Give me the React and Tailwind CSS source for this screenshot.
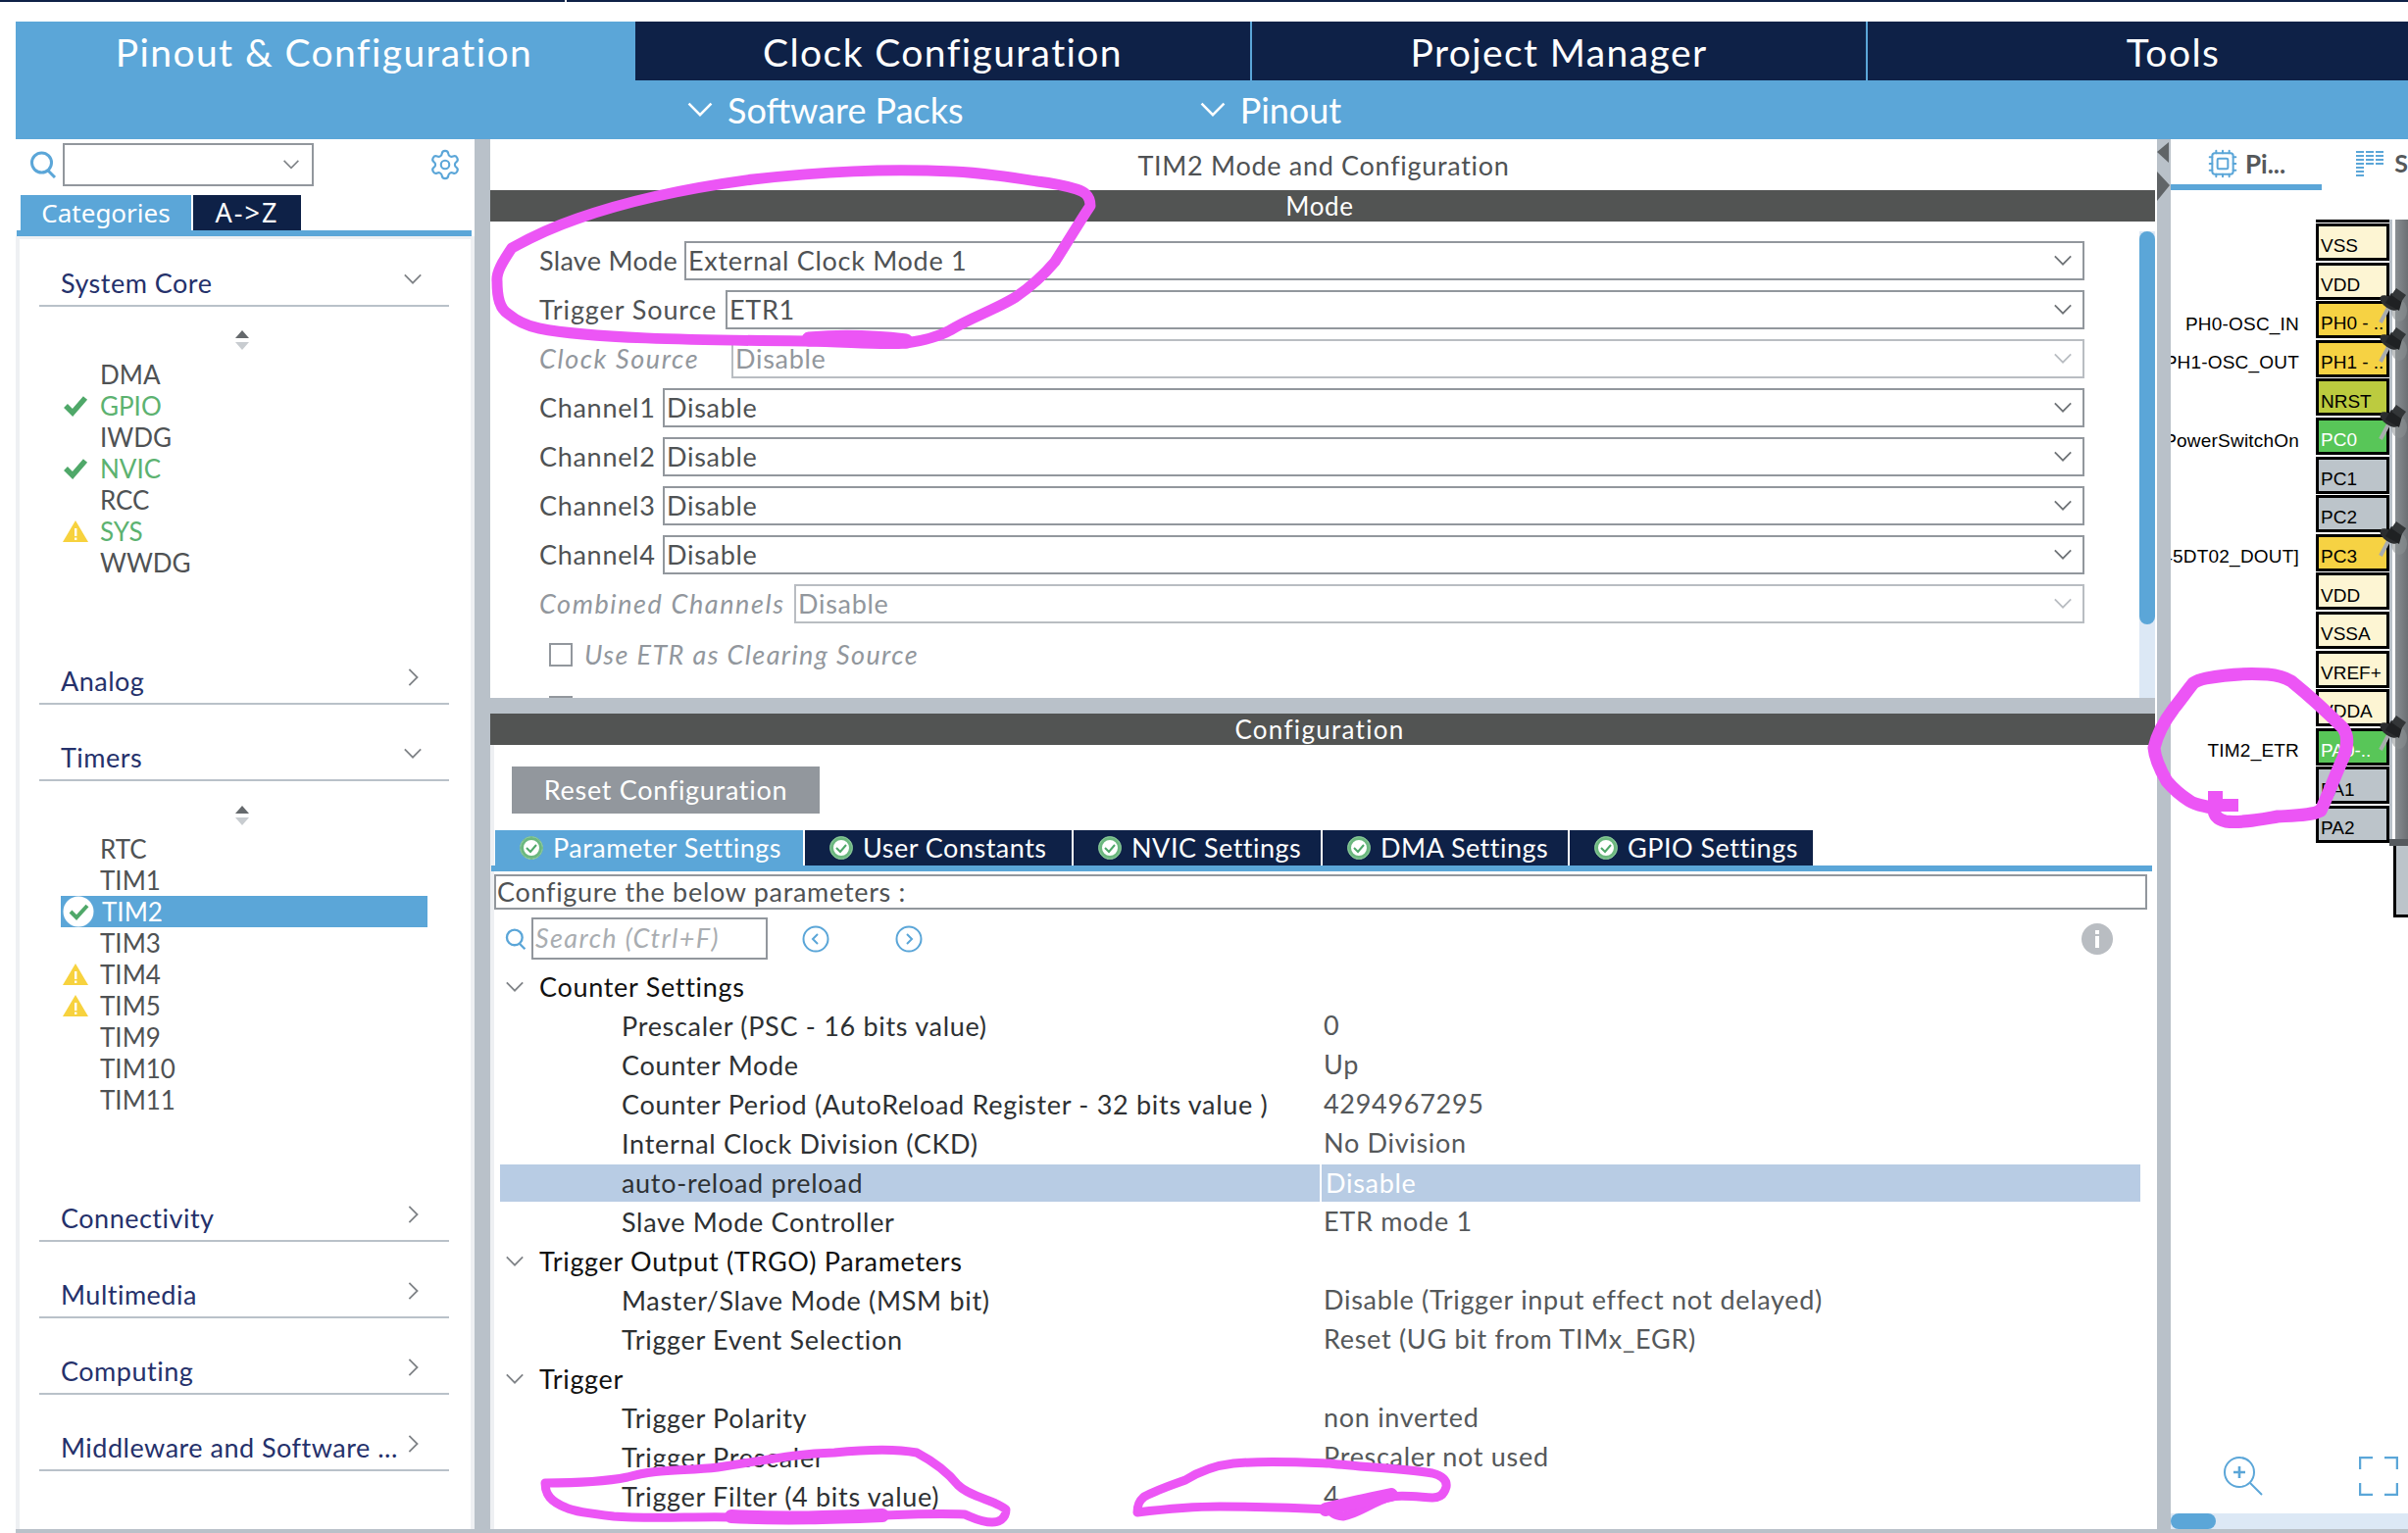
import { Settings, Cpu } from "lucide-react";

const font = "font-['Lato',sans-serif]";

const systemCore = [
  { name: "DMA" },
  { name: "GPIO", icon: "check", green: true },
  { name: "IWDG" },
  { name: "NVIC", icon: "check", green: true },
  { name: "RCC" },
  { name: "SYS", icon: "warn", green: true },
  { name: "WWDG" },
];

const timers = [
  { name: "RTC" },
  { name: "TIM1" },
  { name: "TIM2", icon: "circle", selected: true },
  { name: "TIM3" },
  { name: "TIM4", icon: "warn" },
  { name: "TIM5", icon: "warn" },
  { name: "TIM9" },
  { name: "TIM10" },
  { name: "TIM11" },
];

const modeRows = [
  { label: "Slave Mode", value: "External Clock Mode 1", width: "w-[148px] tracking-[0.3px]" },
  { label: "Trigger Source", value: "ETR1", width: "w-[190px] tracking-[0.9px]" },
  { label: "Clock Source", value: "Disable", width: "w-[196px]", disabled: true },
  { label: "Channel1", value: "Disable", width: "w-[126px]" },
  { label: "Channel2", value: "Disable", width: "w-[126px]" },
  { label: "Channel3", value: "Disable", width: "w-[126px]" },
  { label: "Channel4", value: "Disable", width: "w-[126px]" },
  { label: "Combined Channels", value: "Disable", width: "w-[260px]", disabled: true },
];

const configTabs = [
  { name: "Parameter Settings", width: "w-[314px]", active: true },
  { name: "User Constants", width: "w-[272px]" },
  { name: "NVIC Settings", width: "w-[252px]" },
  { name: "DMA Settings", width: "w-[250px]" },
  { name: "GPIO Settings", width: "w-[248px]" },
];

const params = [
  { head: "Counter Settings" },
  { label: "Prescaler (PSC - 16 bits value)", value: "0" },
  { label: "Counter Mode", value: "Up" },
  { label: "Counter Period (AutoReload Register - 32 bits value )", value: "4294967295" },
  { label: "Internal Clock Division (CKD)", value: "No Division" },
  { label: "auto-reload preload", value: "Disable", selected: true },
  { label: "Slave Mode Controller", value: "ETR mode 1" },
  { head: "Trigger Output (TRGO) Parameters" },
  { label: "Master/Slave Mode (MSM bit)", value: "Disable (Trigger input effect not delayed)" },
  { label: "Trigger Event Selection", value: "Reset (UG bit from TIMx_EGR)" },
  { head: "Trigger" },
  { label: "Trigger Polarity", value: "non inverted" },
  { label: "Trigger Prescaler", value: "Prescaler not used" },
  { label: "Trigger Filter (4 bits value)", value: "4" },
];

const pins = [
  { name: "VSS", bg: "bg-[#fdf5d3]" },
  { name: "VDD", bg: "bg-[#fdf5d3]" },
  { name: "PH0 - ..", bg: "bg-[#f6d243]", label: "PH0-OSC_IN", pinned: true },
  { name: "PH1 - ..", bg: "bg-[#f6d243]", label: "PH1-OSC_OUT", pinned: true },
  { name: "NRST", bg: "bg-[#bccb3f]" },
  { name: "PC0", bg: "bg-[#58c658]", label: "PowerSwitchOn", pinned: true, light: true },
  { name: "PC1", bg: "bg-[#bcc4ca]" },
  { name: "PC2", bg: "bg-[#bcc4ca]" },
  { name: "PC3", bg: "bg-[#f6d243]", label: "PDM_OUT [MP45DT02_DOUT]", pinned: true },
  { name: "VDD", bg: "bg-[#fdf5d3]" },
  { name: "VSSA", bg: "bg-[#fdf5d3]" },
  { name: "VREF+", bg: "bg-[#fdf5d3]" },
  { name: "VDDA", bg: "bg-[#fdf5d3]" },
  { name: "PA0-..", bg: "bg-[#58c658]", label: "TIM2_ETR", pinned: true, light: true },
  { name: "PA1", bg: "bg-[#bcc4ca]" },
  { name: "PA2", bg: "bg-[#bcc4ca]" },
];

function Chevron({ dir = "down", className = "" }) {
  const d = dir === "down" ? "M2 6l9 9 9-9" : "M7 2l9 9-9 9";
  return (
    <svg viewBox="0 0 22 22" className={className} fill="none" stroke="currentColor" strokeWidth="2">
      <path d={d} />
    </svg>
  );
}

function SearchIcon({ className = "" }) {
  return (
    <svg viewBox="0 0 28 28" className={className} fill="none" stroke="#5ba6d8" strokeWidth="3">
      <circle cx="12.5" cy="12" r="10" />
      <path d="M19 20l7 7" />
    </svg>
  );
}

function StatusIcon({ type }) {
  if (type === "check") {
    return (
      <svg viewBox="0 0 26 22" className="h-[24px] w-[26px]" fill="none" stroke="#4fa869" strokeWidth="5.5">
        <path d="M3 11l7 7L23 3" />
      </svg>
    );
  }
  if (type === "warn") {
    return (
      <svg viewBox="0 0 26 24" className="h-[24px] w-[26px]">
        <path d="M13 1L26 23H0z" fill="#f7d23e" />
        <rect x="12" y="9" width="2.4" height="8" fill="#fff" />
        <rect x="12" y="18.5" width="2.4" height="2.4" fill="#fff" />
      </svg>
    );
  }
  return (
    <svg viewBox="0 0 32 32" className="h-[32px] w-[32px]">
      <ellipse cx="16" cy="16" rx="15.5" ry="15.5" fill="#fff" />
      <path d="M8 16l6 6L25 10" fill="none" stroke="#4fa869" strokeWidth="4" />
    </svg>
  );
}

function TabCheck() {
  return (
    <svg viewBox="0 0 24 24" className="h-[24px] w-[24px] shrink-0">
      <circle cx="12" cy="12" r="11.5" fill="#fff" stroke="#72bc85" strokeWidth="1" />
      <circle cx="12" cy="12" r="9.5" fill="#fff" stroke="#6cb87f" strokeWidth="3" />
      <path d="M7 12l4 4 6-7" fill="none" stroke="#4fa869" strokeWidth="2" />
    </svg>
  );
}

function SortArrows() {
  return (
    <svg viewBox="0 0 16 22" className="ml-[177px] h-[22px] w-[16px]">
      <path d="M8 1l7 8H1z" fill="#65696c" />
      <path d="M8 21l7-8H1z" fill="#c8ccd0" />
    </svg>
  );
}

function SectionHeader({ name, open, className = "" }) {
  return (
    <div className={`flex h-[50px] items-center justify-between border-b-2 border-[#b9c1c9] pl-[22px] pr-[27px] ${className}`}>
      <span className="mt-1 text-[27px] tracking-[0.5px] text-[#25316b]">{name}</span>
      <Chevron dir={open ? "down" : "right"} className="mb-1 h-[20px] w-[20px] text-[#808488]" />
    </div>
  );
}

function ItemList({ items }) {
  return (
    <div>
      {items.map((item) => (
        <div
          key={item.name}
          className={`flex h-[32px] w-[374px] items-center ${item.selected ? "bg-[#5ba6d8] text-white" : item.green ? "text-[#5cb270]" : "text-[#4f5254]"}`}
        >
          <div className="flex w-[40px] shrink-0 justify-start pl-[2px]">
            {item.icon && <StatusIcon type={item.icon} />}
          </div>
          <span className={`text-[26px] ${item.selected ? "ml-[2px]" : ""}`}>{item.name}</span>
        </div>
      ))}
    </div>
  );
}

function Sidebar() {
  return (
    <div className="flex w-[468px] shrink-0 flex-col">
      <div className="flex h-[57px] items-center pl-[14px] pr-[13px] pb-[9px] pt-[4px]">
        <SearchIcon className="h-[28px] w-[28px]" />
        <div className="ml-[6px] flex h-[44px] w-[256px] items-center justify-end border-2 border-[#92979d] pr-[12px]">
          <Chevron className="h-[18px] w-[18px] text-[#808488]" />
        </div>
        <Settings className="ml-auto h-[34px] w-[34px] text-[#5ba6d8]" strokeWidth={1.5} />
      </div>
      <div className="flex pl-[5px]">
        <div className="flex h-[36px] w-[174px] items-center justify-center bg-[#5ba6d8] text-[26px] text-white">Categories</div>
        <div className="ml-[2px] flex h-[36px] w-[110px] items-center justify-center bg-[#0e2147] text-[27px] tracking-[2px] text-white">{"A->Z"}</div>
      </div>
      <div className="ml-[1px] h-[6px] w-[464px] bg-[#5ba6d8]" />
      <div className="flex-1 border-x-[4px] border-t-[3px] border-x-[#eef0f3] border-t-[#eef0f3] bg-white pl-[20px] pr-[22px] pt-[19px]">
        <div className={`flex flex-col ${font}`}>
          <SectionHeader name="System Core" open />
          <div className="pl-[22px] pt-[23px]">
            <div className="mb-[8px] w-[374px]"><SortArrows /></div>
            <ItemList items={systemCore} />
          </div>
          <SectionHeader name="Analog" className="mt-[79px]" />
          <SectionHeader name="Timers" open className="mt-[28px]" />
          <div className="pl-[22px] pt-[24px]">
            <div className="mb-[7px] w-[374px]"><SortArrows /></div>
            <ItemList items={timers} />
          </div>
          <SectionHeader name="Connectivity" className="mt-[79px]" />
          <SectionHeader name="Multimedia" className="mt-[28px]" />
          <SectionHeader name="Computing" className="mt-[28px]" />
          <SectionHeader name="Middleware and Software ..." className="mt-[28px]" />
        </div>
      </div>
    </div>
  );
}

function ModeRow({ row }) {
  const color = row.disabled ? "text-[#92979d]" : "text-[#4f5254]";
  return (
    <div className="mb-[10px] flex h-[40px] items-center">
      <span className={`${row.width} shrink-0 whitespace-nowrap text-[27px] ${color} ${row.disabled ? "italic tracking-[1.6px]" : ""}`}>{row.label}</span>
      <div className={`flex h-[40px] flex-1 items-center justify-between border-2 ${row.disabled ? "border-[#b9bdc2]" : "border-[#92979d]"} pl-[2px] pr-[10px]`}>
        <span className={`text-[27px] ${color}`}>{row.value}</span>
        <Chevron className={`h-[20px] w-[20px] ${row.disabled ? "text-[#b9bdc2]" : "text-[#707478]"}`} />
      </div>
    </div>
  );
}

function ModePanel() {
  return (
    <div className="flex h-[486px] overflow-hidden">
      <div className="w-[1682px] pl-[50px] pr-[56px] pt-[20px]">
        {modeRows.map((row) => (
          <ModeRow key={row.label} row={row} />
        ))}
        <div className="flex h-[44px] items-center pl-[10px]">
          <div className="h-[24px] w-[24px] border-2 border-[#92979d]" />
          <span className="ml-[12px] text-[27px] italic tracking-[1.4px] text-[#92979d]">Use ETR as Clearing Source</span>
        </div>
        <div className="ml-[10px] mt-[20px] h-[24px] w-[24px] border-2 border-[#92979d]" />
      </div>
      <div className="mt-[10px] w-[16px] bg-[#dce8f5]">
        <div className="h-[401px] rounded-full bg-[#5ba6d8]" />
      </div>
    </div>
  );
}

function ParamRow({ row }) {
  if (row.head) {
    return (
      <div className="ml-[10px] flex h-[40px] items-center">
        <Chevron className="ml-[5px] h-[20px] w-[20px] text-[#808488]" />
        <span className="ml-[15px] text-[27px] text-[#111]">{row.head}</span>
      </div>
    );
  }
  return (
    <div className={`ml-[10px] flex h-[40px] w-[1673px] items-center text-[27px] ${row.selected ? "border-y border-white bg-[#b8cce4]" : ""}`}>
      <div className="w-[836px] shrink-0 pl-[124px] text-[#2e3133]">{row.label}</div>
      <div className={`h-full flex-1 pl-[4px] leading-[38px] ${row.selected ? "border-l-2 border-white text-white" : "text-[#55585a]"}`}>{row.value}</div>
    </div>
  );
}

function ConfigPanel() {
  return (
    <div className="flex-1 border-l-[4px] border-[#eef0f3]">
      <div className="pl-[18px] pt-[22px]">
        <div className="flex h-[48px] w-[314px] items-center justify-center bg-[#92979d] text-[27px] text-white">Reset Configuration</div>
      </div>
      <div className="mt-[17px] flex gap-[2px] pl-[1px]">
        {configTabs.map((tab) => (
          <div
            key={tab.name}
            className={`flex h-[36px] items-center gap-[10px] pl-[25px] text-[27px] tracking-[0.5px] text-white ${tab.width} ${tab.active ? "bg-[#5ba6d8]" : "bg-[#0e2147]"}`}
          >
            <TabCheck />
            <span>{tab.name}</span>
          </div>
        ))}
      </div>
      <div className="-ml-[3px] h-[6px] w-[1694px] bg-[#5ba6d8]" />
      <div className="ml-[0px] mt-[3px] flex h-[36px] w-[1686px] items-center border-2 border-[#92979d] pl-[1px] text-[27px] text-[#4f5254]">
        Configure the below parameters :
      </div>
      <div className="mt-[8px] flex h-[43px] items-center pl-[11px]">
        <SearchIcon className="h-[24px] w-[22px]" />
        <div className="ml-[5px] flex h-[43px] w-[241px] items-center border-2 border-[#92979d] pl-[2px] text-[27px] italic tracking-[1.4px] text-[#a9adb1]">Search (Ctrl+F)</div>
        <svg viewBox="0 0 28 28" className="ml-[35px] h-[28px] w-[28px]" fill="none" stroke="#5ba6d8" strokeWidth="2">
          <circle cx="14" cy="14" r="12.5" />
          <path d="M16 9l-5 5 5 5" />
        </svg>
        <svg viewBox="0 0 28 28" className="ml-[67px] h-[28px] w-[28px]" fill="none" stroke="#5ba6d8" strokeWidth="2">
          <circle cx="14" cy="14" r="12.5" />
          <path d="M12 9l5 5-5 5" />
        </svg>
        <svg viewBox="0 0 32 32" className="ml-[1182px] h-[32px] w-[32px]">
          <circle cx="16" cy="16" r="16" fill="#b9bdc2" />
          <rect x="14" y="13" width="4" height="12" fill="#fff" />
          <rect x="14" y="7" width="4" height="4" fill="#fff" />
        </svg>
      </div>
      <div className="mt-[8px] -ml-[4px]">
        {params.map((row) => (
          <ParamRow key={row.head || row.label} row={row} />
        ))}
      </div>
    </div>
  );
}

function CenterPanel() {
  return (
    <div className={`flex w-[1700px] shrink-0 flex-col tracking-[0.7px] ${font}`}>
      <div className="flex h-[52px] items-center justify-center pt-[2px] text-[27px] text-[#4f5254]">TIM2 Mode and Configuration</div>
      <div className="flex h-[32px] w-[1698px] items-center justify-center bg-[#525453] pr-[6px] text-[26px] text-white">Mode</div>
      <ModePanel />
      <div className="h-[16px] w-[1698px] bg-[#b9c1c9]" />
      <div className="flex h-[32px] w-[1698px] items-center justify-center bg-[#525453] pr-[6px] text-[26px] tracking-[1.3px] text-white">Configuration</div>
      <ConfigPanel />
    </div>
  );
}

function Pushpin() {
  return (
    <svg viewBox="0 0 30 38" className="absolute -top-[17px] left-[60px] z-10 h-[38px] w-[30px]">
      <ellipse cx="22" cy="24" rx="8" ry="11" fill="#8d9194" opacity="0.55" />
      <path d="M3 36l8-15" stroke="#a8abad" strokeWidth="4" fill="none" />
      <ellipse cx="12" cy="16" rx="11" ry="5.5" transform="rotate(35 12 16)" fill="#2b2d2f" />
      <path d="M14 6l11 7-3 11-14-8z" fill="#1f2123" />
      <path d="M19 1l10 7-5 7-10-7z" fill="#333638" />
    </svg>
  );
}

function PinRow({ pin }) {
  return (
    <div className="flex h-[39.6px] items-start">
      <div className="flex h-[39.6px] w-[148px] shrink-0 items-center justify-end overflow-hidden pr-[17px] pt-[8px] font-['Liberation_Sans',sans-serif] text-[19px] tracking-[0.2px] text-black">
        <span className="shrink-0 whitespace-nowrap">{pin.label}</span>
      </div>
      <div className={`relative flex h-[38px] w-[75px] shrink-0 items-center overflow-visible border-[3px] border-black pl-[2px] pt-[9px] font-['Liberation_Sans',sans-serif] text-[19px] ${pin.bg} ${pin.light ? "text-white" : "text-black"}`}>
        <span className="whitespace-nowrap">{pin.name}</span>
        {pin.pinned && <Pushpin />}
      </div>
    </div>
  );
}

function PinoutPanel() {
  return (
    <div className="relative flex w-[242px] shrink-0 flex-col overflow-hidden">
      <div className={`flex h-[46px] items-center pt-[4px] ${font}`}>
        <div className="flex w-[154px] items-center pl-[37px]">
          <Cpu className="h-[32px] w-[32px] text-[#5ba6d8]" strokeWidth={1.5} />
          <span className="ml-[7px] text-[26px] font-bold text-[#55585a]">Pi...</span>
        </div>
        <div className="ml-[36px] flex items-center">
          <svg viewBox="0 0 28 26" className="h-[26px] w-[28px]" fill="#5ba6d8">
            <rect x="0" y="0" width="8" height="2" /><rect x="10" y="0" width="8" height="2" /><rect x="20" y="0" width="8" height="2" />
            <rect x="0" y="4" width="8" height="2" /><rect x="10" y="4" width="8" height="2" /><rect x="20" y="4" width="8" height="2" />
            <rect x="0" y="8" width="8" height="2" /><rect x="10" y="8" width="8" height="2" /><rect x="20" y="8" width="8" height="2" />
            <rect x="0" y="12" width="8" height="2" /><rect x="10" y="12" width="8" height="2" /><rect x="20" y="12" width="8" height="2" />
            <rect x="0" y="16" width="8" height="2" /><rect x="0" y="20" width="8" height="2" /><rect x="0" y="24" width="8" height="2" />
          </svg>
          <span className="ml-[11px] text-[25px] font-bold text-[#55585a]">S</span>
        </div>
      </div>
      <div className="h-[6px] w-[154px] bg-[#5ba6d8]" />
      <div className="flex flex-1 items-start pt-[30px]">
        <div className="relative z-10">
          <div className="ml-[148px] h-[4px] w-[75px] border-t-[3px] border-black" />
          {pins.map((pin, i) => (
            <PinRow key={pin.name + i} pin={pin} />
          ))}
        </div>
        <div className="flex w-[19px] flex-col">
          <div className="flex h-[639px] border-b-[7px] border-[#555a5e]">
            <div className="w-[3px] bg-[#b9c1c9]" />
            <div className="ml-[3px] flex-1 bg-gradient-to-r from-[#8a8f93] to-[#6c7074]" />
          </div>
          <div className="ml-[4px] h-[73px] border-b-[3px] border-l-[3px] border-black bg-[#bcc4ca]" />
        </div>
      </div>
      <div className="flex h-[40px] items-center pl-[54px]">
        <svg viewBox="0 0 40 40" className="h-[40px] w-[40px]" fill="none" stroke="#5ba6d8" strokeWidth="2">
          <circle cx="16" cy="16" r="15" />
          <path d="M16 10v12M10 16h12" strokeWidth="2.6" />
          <path d="M27 27l12 12" />
        </svg>
        <svg viewBox="0 0 40 40" className="ml-[98px] h-[40px] w-[40px]" fill="none" stroke="#5ba6d8" strokeWidth="2.5">
          <path d="M1 13V1h13M26 1h13v12M39 27v12H26M14 39H1V27" />
        </svg>
      </div>
      <div className="mt-[18px] h-[16px] bg-[#dce8f5]">
        <div className="h-[16px] w-[46px] rounded-full bg-[#5ba6d8]" />
      </div>
    </div>
  );
}

function Annotations() {
  return (
    <svg viewBox="0 0 2456 1564" className="pointer-events-none absolute left-0 top-0 z-20 h-[1564px] w-[2456px]" fill="none" stroke="#ec55f5" strokeLinecap="round" strokeLinejoin="round">
      <path
        d="M973 175C900 172 840 175 768 183C700 192 640 205 589 223C560 233 540 243 522 253C512 268 506 278 507 287C507 305 510 315 518 320C530 330 540 333 550 335C600 345 700 347 821 348C870 349 900 352 924 350C945 347 960 342 969 337C990 324 1015 316 1036 303C1055 290 1065 280 1076 267C1090 245 1100 228 1112 210C1112 198 1104 195 1098 193C1085 189 1075 187 1058 185C1025 180 1000 176 973 175Z"
        strokeWidth="11"
      />
      <path d="M825 346C860 343 890 344 924 348" strokeWidth="15" />
      <path
        d="M2250 692C2270 688 2295 687 2313 688C2325 689 2332 692 2337 695C2358 712 2375 728 2390 743C2396 752 2394 762 2390 773C2382 790 2375 810 2367 827C2358 832 2342 832 2323 833C2305 836 2285 840 2270 838C2262 836 2258 832 2258 825C2250 822 2240 822 2233 817C2222 810 2216 804 2210 797C2203 785 2198 775 2197 763C2200 750 2208 735 2217 723C2225 713 2232 703 2237 697C2241 694 2245 693 2250 692Z"
        strokeWidth="13"
      />
      <path d="M2252 807h15v8h16v13h-31z" fill="#ec55f5" strokeWidth="0" />
      <path
        d="M556 1513C590 1513 615 1512 640 1507C670 1498 700 1501 732 1497C780 1490 810 1483 851 1482C890 1478 915 1478 935 1482C950 1490 965 1500 977 1515C990 1528 1015 1530 1026 1540C1026 1550 1018 1553 1012 1553C1000 1553 992 1548 984 1545C940 1543 900 1547 851 1547C810 1549 780 1548 746 1548C710 1547 660 1550 626 1547C600 1544 585 1542 577 1538C562 1532 556 1525 556 1513Z"
        strokeWidth="9"
      />
      <path d="M746 1547C800 1550 850 1548 900 1546" strokeWidth="14" />
      <path
        d="M1167 1527C1180 1520 1195 1515 1209 1510C1225 1500 1240 1495 1258 1493C1290 1490 1330 1492 1356 1493C1390 1497 1430 1498 1461 1503C1472 1506 1476 1511 1475 1517C1473 1525 1468 1528 1461 1528C1445 1527 1430 1525 1419 1527C1400 1532 1385 1545 1370 1547C1360 1546 1358 1543 1356 1540C1320 1538 1280 1537 1244 1537C1210 1537 1185 1540 1160 1543C1160 1535 1162 1531 1167 1527Z"
        strokeWidth="9"
      />
      <path d="M1352 1540C1372 1535 1395 1530 1419 1525" strokeWidth="14" />
    </svg>
  );
}

export default function App() {
  return (
    <div className="relative h-[1564px] w-[2456px] overflow-hidden bg-white">
      <div className="flex h-[2px]">
        <div className="w-[576px] bg-[#0e2147]" />
        <div className="ml-[2px] flex-1 bg-[#0e2147]" />
      </div>
      <div className="ml-[16px] mt-[20px] bg-[#5ba6d8]">
        <div className={`flex h-[60px] text-[39px] tracking-[1.4px] text-white ${font}`}>
          <div className="flex w-[629px] items-center justify-center pt-[2px]">Pinout &amp; Configuration</div>
          <div className="ml-[3px] flex w-[627px] items-center justify-center bg-[#0e2147] pt-[2px]">Clock Configuration</div>
          <div className="ml-[2px] flex w-[626px] items-center justify-center bg-[#0e2147] pt-[2px]">Project Manager</div>
          <div className="ml-[2px] flex flex-1 items-center justify-center bg-[#0e2147] pl-[72px] pt-[2px]">Tools</div>
        </div>
        <div className={`flex h-[60px] items-center pl-[684px] text-[36px] text-white ${font}`}>
          <Chevron className="h-[28px] w-[28px]" />
          <span className="ml-[14px]">Software Packs</span>
          <Chevron className="ml-[240px] h-[28px] w-[28px]" />
          <span className="ml-[14px]">Pinout</span>
        </div>
      </div>
      <div className="ml-[16px] flex h-[1418px]">
        <Sidebar />
        <div className="w-[16px] shrink-0 bg-[#b9c1c9]" />
        <CenterPanel />
        <div className="relative w-[14px] shrink-0 bg-[#b9c1c9]">
          <svg viewBox="0 0 14 60" className="absolute left-0 top-[3px] h-[60px] w-[14px]" fill="#606467">
            <path d="M12 0v21L0 10z" />
            <path d="M0 30l13 14L0 60z" />
          </svg>
        </div>
        <PinoutPanel />
      </div>
      <div className="ml-[16px] h-[4px] bg-[#b9c1c9]" />
      <Annotations />
    </div>
  );
}
